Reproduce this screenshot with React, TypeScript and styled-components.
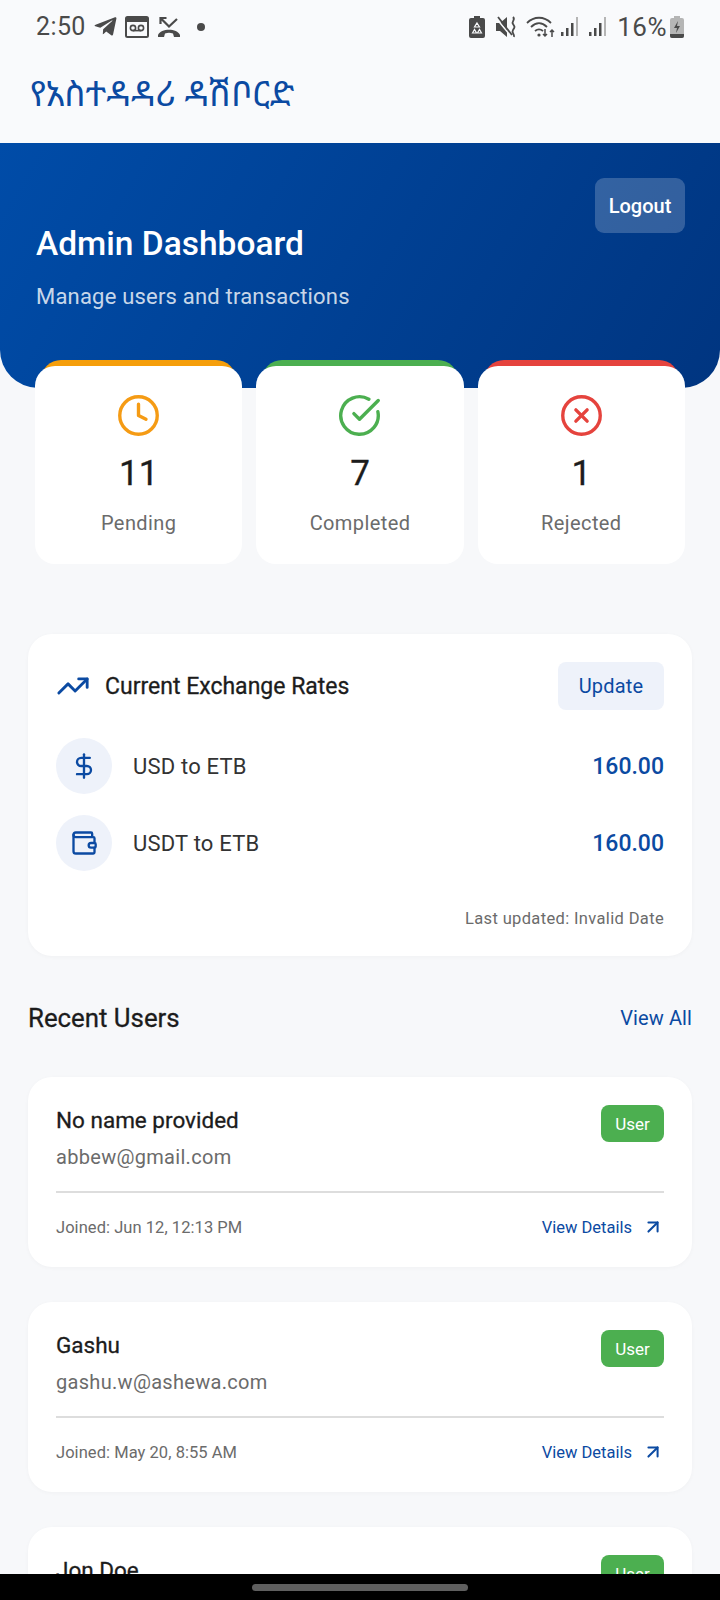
import React from "react";
import styled, { createGlobalStyle } from "styled-components";
import { Clock, CircleCheckBig, CircleX, TrendingUp, DollarSign, Wallet, ArrowUpRight } from "lucide-react";
import { FaTelegramPlane } from "react-icons/fa";

const BLUE = "#0b4aa2";
const FONT = `Roboto, "Noto Sans", sans-serif`;

const GlobalStyle = createGlobalStyle`
  html, body {
    margin: 0;
    padding: 0;
    background: #f7f8fa;
    font-family: ${FONT};
  }
  * { box-sizing: border-box; }
`;

const Screen = styled.div`
  position: relative;
  width: 720px;
  height: 1600px;
  overflow: hidden;
  background: #f7f8fa;
`;

const StatusBar = styled.div`
  height: 53px;
  padding: 0 36px 0 36px;
  display: flex;
  align-items: center;
  justify-content: space-between;
  background: #f9fafc;
  color: #4a4a4a;
`;

const StatusGroup = styled.div`
  display: flex;
  align-items: center;
`;

const Time = styled.span`
  font-size: 25px;
  letter-spacing: 0.4px;
  margin-right: 7px;
`;

const Percent = styled.span`
  font-size: 26px;
  letter-spacing: 0.5px;
  margin: 0 3px 0 10px;
`;

const AppBar = styled.div`
  height: 90px;
  padding: 18px 30px 0;
  background: #f9fafc;
  font-family: "Noto Sans Ethiopic", "Abyssinica SIL", "DejaVu Sans", "Noto Sans", sans-serif;
  font-size: 34.5px;
  line-height: 44px;
  color: ${BLUE};
`;

const Hero = styled.div`
  height: 245px;
  padding: 35px 35px 0 36px;
  display: flex;
  align-items: flex-start;
  justify-content: space-between;
  background: linear-gradient(120deg, #004ca8 0%, #003580 100%);
  border-radius: 0 0 38px 38px;
`;

const HeroText = styled.div`
  padding-top: 44px;
`;

const HeroTitle = styled.h1`
  margin: 0;
  font-size: 33.5px;
  line-height: 44px;
  font-weight: 500;
  color: #fff;
`;

const HeroSub = styled.p`
  margin: 16px 0 0;
  font-size: 22px;
  letter-spacing: 0.2px;
  line-height: 30px;
  color: rgba(255, 255, 255, 0.8);
`;

const LogoutButton = styled.button`
  width: 90px;
  height: 55px;
  border: 0;
  border-radius: 9px;
  padding: 0;
  background: rgba(255, 255, 255, 0.2);
  color: #fff;
  font: 500 20px ${FONT};
`;

const StatsLayer = styled.div`
  position: relative;
  z-index: 0;
`;

const StatsRow = styled.div`
  margin: -22px 35px 0;
  display: grid;
  grid-template-columns: repeat(3, 1fr);
  gap: 14px;
`;

const StatCard = styled.div<{ $accent: string }>`
  position: relative;
  height: 198px;
  padding-top: 27px;
  display: flex;
  flex-direction: column;
  align-items: center;
  background: #fff;
  border-radius: 20px;

  &::before {
    content: "";
    position: absolute;
    z-index: -1;
    top: -6px;
    left: 6px;
    right: 6px;
    height: 30px;
    border-radius: 20px 20px 0 0;
    background: ${(p) => p.$accent};
  }
`;

const StatValue = styled.div`
  margin-top: 12px;
  font-size: 35px;
  -webkit-text-stroke: 0.3px #1c1c1c;
  line-height: 48px;
  color: #1c1c1c;
`;

const StatLabel = styled.div`
  margin-top: 11px;
  font-size: 20px;
  letter-spacing: 0.4px;
  line-height: 28px;
  color: #6b6b6b;
`;

const Content = styled.div`
  padding: 70px 28px 0;
`;

const Card = styled.div`
  background: #fff;
  border-radius: 24px;
  box-shadow: 0 1px 4px rgba(0, 0, 0, 0.03);
`;

const RatesCard = styled(Card)`
  height: 322px;
  padding: 28px 28px 0;
`;

const RatesHeader = styled.div`
  display: flex;
  align-items: center;
  justify-content: space-between;
  margin-bottom: 28px;
`;

const RatesTitle = styled.div`
  display: flex;
  align-items: center;
  gap: 15px;
  font-size: 23px;
  -webkit-text-stroke: 0.3px #1c1c1c;
  color: #1c1c1c;
`;

const UpdateButton = styled.button`
  width: 106px;
  height: 48px;
  border: 0;
  border-radius: 8px;
  padding: 0;
  background: #eef2fa;
  color: ${BLUE};
  font: 400 20px ${FONT};
  letter-spacing: 0.2px;
`;

const RateRow = styled.div`
  display: flex;
  align-items: center;
  height: 56px;
  margin-bottom: 21px;
`;

const RateIcon = styled.div`
  width: 56px;
  height: 56px;
  border-radius: 50%;
  display: flex;
  align-items: center;
  justify-content: center;
  background: #eef2fa;
  color: ${BLUE};
`;

const RateLabel = styled.span`
  flex: 1;
  margin-left: 21px;
  font-size: 22px;
  letter-spacing: 0.2px;
  color: #333;
`;

const RateValue = styled.span`
  font-size: 23px;
  font-weight: 500;
  color: ${BLUE};
`;

const LastUpdated = styled.div`
  margin-top: 36px;
  text-align: right;
  font-size: 16.5px;
  letter-spacing: 0.35px;
  line-height: 24px;
  color: #6b6b6b;
`;

const SectionHeader = styled.div`
  display: flex;
  align-items: center;
  justify-content: space-between;
  height: 40px;
  margin: 42px 0 39px;
`;

const SectionTitle = styled.h2`
  margin: 0;
  font-size: 25.8px;
  font-weight: 400;
  -webkit-text-stroke: 0.3px #1c1c1c;
  color: #1c1c1c;
`;

const ViewAll = styled.span`
  font-size: 20px;
  letter-spacing: 0.1px;
  color: ${BLUE};
`;

const UserCard = styled(Card)`
  height: 190px;
  margin-bottom: 35px;
  padding: 28px 28px 0;
`;

const UserTop = styled.div`
  display: flex;
  justify-content: space-between;
  align-items: flex-start;
  height: 86px;
`;

const UserName = styled.div`
  font-size: 22.5px;
  line-height: 30px;
  -webkit-text-stroke: 0.3px #1c1c1c;
  color: #1c1c1c;
`;

const UserEmail = styled.div`
  margin-top: 9px;
  font-size: 20px;
  letter-spacing: 0.3px;
  line-height: 26px;
  color: #6b6b6b;
`;

const Badge = styled.span`
  width: 63px;
  height: 37px;
  display: flex;
  align-items: center;
  justify-content: center;
  border-radius: 8px;
  background: #4caf50;
  color: #fff;
  font-size: 17px;
`;

const UserBottom = styled.div`
  display: flex;
  justify-content: space-between;
  align-items: center;
  height: 70px;
  border-top: 2px solid #ddd;
`;

const Joined = styled.span`
  font-size: 16.5px;
  letter-spacing: 0.05px;
  color: #6b6b6b;
`;

const DetailsLink = styled.span`
  display: flex;
  align-items: center;
  gap: 10px;
  font-size: 16.5px;
  color: ${BLUE};
`;

const NavBar = styled.div`
  position: absolute;
  left: 0;
  right: 0;
  bottom: 0;
  height: 26px;
  display: flex;
  justify-content: center;
  padding-top: 10px;
  background: #000;
`;

const NavPill = styled.div`
  width: 216px;
  height: 7px;
  border-radius: 4px;
  background: #5f5f5f;
`;

const VoicemailBox = () => (
  <svg width="24" height="22" viewBox="0 0 24 22" style={{ marginLeft: 7 }}>
    <rect x="1" y="1" width="22" height="20" rx="1.5" fill="none" stroke="#4a4a4a" strokeWidth="2" />
    <rect x="1" y="1" width="22" height="5" fill="#4a4a4a" />
    <circle cx="8" cy="12" r="2.6" fill="none" stroke="#4a4a4a" strokeWidth="1.6" />
    <circle cx="16" cy="12" r="2.6" fill="none" stroke="#4a4a4a" strokeWidth="1.6" />
    <path d="M8 14.6h8" stroke="#4a4a4a" strokeWidth="1.6" />
  </svg>
);

const MissedCall = () => (
  <svg width="24" height="22" viewBox="0 0 24 22" style={{ marginLeft: 8 }}>
    <path d="M3.500 8V2h6M3.500 2L12 10.500 20 3" fill="none" stroke="#4a4a4a" strokeWidth="2.200" />
    <path d="M1 21v-2c3-7 19-7 22 0v2h-6l-1-3.500c-3-1-5-1-8 0L7 21z" fill="#4a4a4a" />
  </svg>
);

const RecycleBattery = () => (
  <svg width="16" height="22" viewBox="0 0 16 22">
    <path d="M5 0h6v2h3a2 2 0 0 1 2 2v16a2 2 0 0 1-2 2H2a2 2 0 0 1-2-2V4a2 2 0 0 1 2-2h3z" fill="#4a4a4a" />
    <path d="M8 7l2.500 4H5.500zM3.500 17l2-3.500 2 3.500zM12.500 17l-2-3.500-2 3.500z" fill="none" stroke="#f9fafc" strokeWidth="1.200" />
  </svg>
);

const MutedVibrate = () => (
  <svg width="21" height="22" viewBox="0 0 21 22" style={{ marginLeft: 11 }}>
    <path d="M0 7h4l7-6v20l-7-6H0z" fill="#4a4a4a" />
    <path d="M0 2l14 17" stroke="#f9fafc" strokeWidth="1.500" />
    <path d="M2 1l14 18" stroke="#4a4a4a" strokeWidth="1.800" />
    <path d="M17 1c3 3-2 4 0 7s2 3 0 6 2 4 1 7" fill="none" stroke="#4a4a4a" strokeWidth="1.800" />
  </svg>
);

const WifiIcon = () => (
  <svg width="29" height="22" viewBox="0 0 29 22" style={{ marginLeft: 9 }}>
    <path d="M1 7c7-7 17-7 24 0M5 11c5-5 11-5 16 0M9 15c3-2.500 5-2.500 8 0" fill="none" stroke="#4a4a4a" strokeWidth="1.800" />
    <circle cx="13" cy="19" r="1.600" fill="#4a4a4a" />
    <path d="M19 13v7M17 18l2 2 2-2M26 21v-7M24 16l2-2 2 2" fill="none" stroke="#4a4a4a" strokeWidth="1.500" />
  </svg>
);

const SignalIcon = ({ gap }: { gap: number }) => (
  <svg width="18" height="20" viewBox="0 0 18 20" style={{ marginLeft: gap }}>
    <rect x="0" y="15" width="2.500" height="4" fill="#4a4a4a" />
    <rect x="5" y="11" width="2.500" height="8" fill="#4a4a4a" />
    <rect x="10" y="6" width="2.500" height="13" fill="#4a4a4a" />
    <rect x="15" y="0" width="2" height="19" fill="#b5b5b5" />
  </svg>
);

const ChargingBattery = () => (
  <svg width="14" height="22" viewBox="0 0 14 22">
    <path d="M4 0h6v2h2a2 2 0 0 1 2 2v16a2 2 0 0 1-2 2H2a2 2 0 0 1-2-2V4a2 2 0 0 1 2-2h2z" fill="#b5b5b5" />
    <path d="M0 18h14v2a2 2 0 0 1-2 2H2a2 2 0 0 1-2-2z" fill="#4a4a4a" />
    <path d="M8 5L4 12h3l-1 5 4-7H7z" fill="#4a4a4a" />
  </svg>
);

type UserRow = { name: string; email?: string; joined?: string };

// the third card runs off the bottom of the screen, only its name and badge show
const users: UserRow[] = [
  { name: "No name provided", email: "abbew@gmail.com", joined: "Joined: Jun 12, 12:13 PM" },
  { name: "Gashu", email: "gashu.w@ashewa.com", joined: "Joined: May 20, 8:55 AM" },
  { name: "Jon Doe" },
];

const App: React.FC = () => {
  return (
    <Screen>
      <GlobalStyle />
      <StatusBar>
        <StatusGroup>
          <Time>2:50</Time>
          <FaTelegramPlane size={25} color="#4a4a4a" />
          <VoicemailBox />
          <MissedCall />
          <svg width="10" height="10" viewBox="0 0 10 10" style={{ marginLeft: 15 }}>
            <circle cx="5" cy="5" r="4" fill="#4a4a4a" />
          </svg>
        </StatusGroup>
        <StatusGroup>
          <RecycleBattery />
          <MutedVibrate />
          <WifiIcon />
          <SignalIcon gap={6} />
          <SignalIcon gap={10} />
          <Percent>16%</Percent>
          <ChargingBattery />
        </StatusGroup>
      </StatusBar>
      <AppBar>የአስተዳዳሪ ዳሽቦርድ</AppBar>
      <Hero>
        <HeroText>
          <HeroTitle>Admin Dashboard</HeroTitle>
          <HeroSub>Manage users and transactions</HeroSub>
        </HeroText>
        <LogoutButton>Logout</LogoutButton>
      </Hero>
      <StatsLayer>
        <StatsRow>
          <StatCard $accent="#f59e0b">
            <Clock size={45} color="#f59b14" strokeWidth={1.8} />
            <StatValue>11</StatValue>
            <StatLabel>Pending</StatLabel>
          </StatCard>
          <StatCard $accent="#4caf50">
            <CircleCheckBig size={45} color="#4caf50" strokeWidth={1.8} />
            <StatValue>7</StatValue>
            <StatLabel>Completed</StatLabel>
          </StatCard>
          <StatCard $accent="#e5433d">
            <CircleX size={45} color="#e5433d" strokeWidth={1.8} />
            <StatValue>1</StatValue>
            <StatLabel>Rejected</StatLabel>
          </StatCard>
        </StatsRow>
      </StatsLayer>
      <Content>
        <RatesCard>
          <RatesHeader>
            <RatesTitle>
              <TrendingUp size={34} color={BLUE} strokeWidth={2} />
              Current Exchange Rates
            </RatesTitle>
            <UpdateButton>Update</UpdateButton>
          </RatesHeader>
          <RateRow>
            <RateIcon>
              <DollarSign size={28} strokeWidth={2} />
            </RateIcon>
            <RateLabel>USD to ETB</RateLabel>
            <RateValue>160.00</RateValue>
          </RateRow>
          <RateRow>
            <RateIcon>
              <Wallet size={28} strokeWidth={2} />
            </RateIcon>
            <RateLabel>USDT to ETB</RateLabel>
            <RateValue>160.00</RateValue>
          </RateRow>
          <LastUpdated>Last updated: Invalid Date</LastUpdated>
        </RatesCard>
        <SectionHeader>
          <SectionTitle>Recent Users</SectionTitle>
          <ViewAll>View All</ViewAll>
        </SectionHeader>
        {users.map((user) => (
          <UserCard key={user.name}>
            <UserTop>
              <div>
                <UserName>{user.name}</UserName>
                {user.email && <UserEmail>{user.email}</UserEmail>}
              </div>
              <Badge>User</Badge>
            </UserTop>
            {user.joined && (
              <UserBottom>
                <Joined>{user.joined}</Joined>
                <DetailsLink>
                  View Details
                  <ArrowUpRight size={22} strokeWidth={2.2} />
                </DetailsLink>
              </UserBottom>
            )}
          </UserCard>
        ))}
      </Content>
      <NavBar>
        <NavPill />
      </NavBar>
    </Screen>
  );
};

export default App;
